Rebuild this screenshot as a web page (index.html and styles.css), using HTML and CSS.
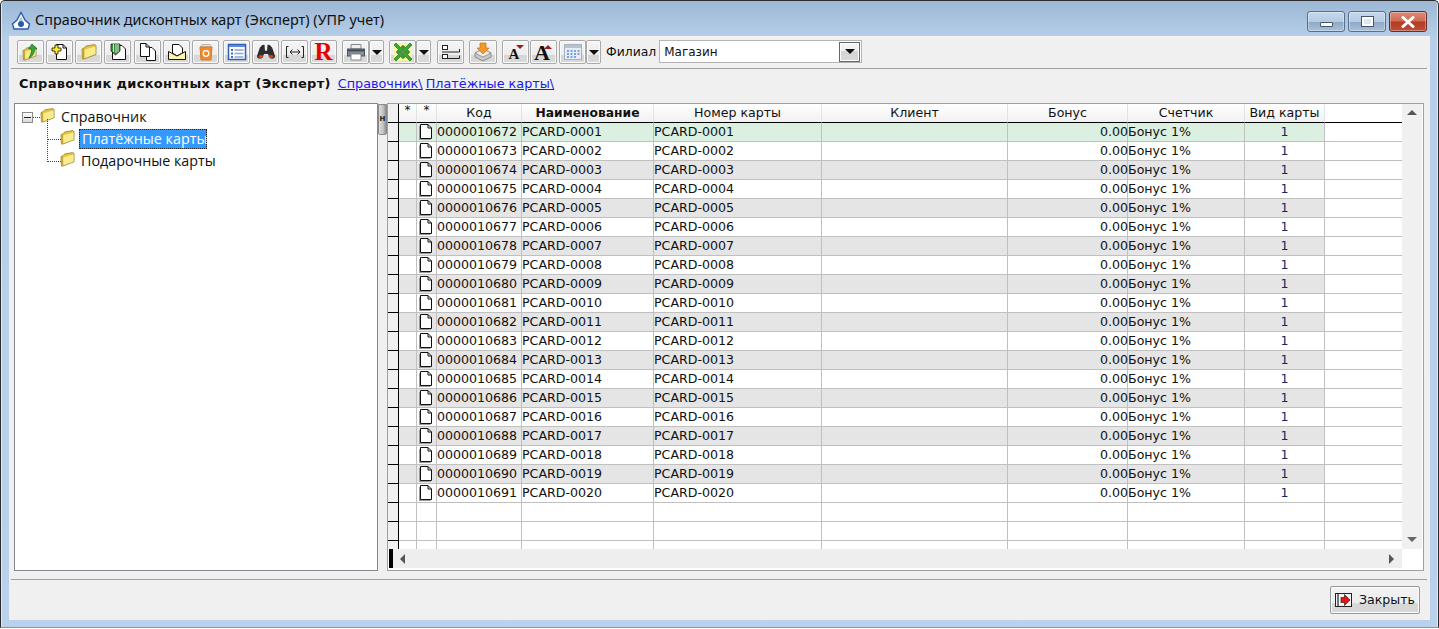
FILE: index.html
```html
<!DOCTYPE html>
<html lang="ru">
<head>
<meta charset="utf-8">
<title>Справочник дисконтных карт (Эксперт) (УПР учет)</title>
<link rel="stylesheet" href="styles.css">
</head>
<body>
<svg class="defs" width="0" height="0">
  <symbol id="folder" viewBox="0 0 16 16">
    <path d="M1 5 4 3.500 5 2 13.500 .6 15 1.500 15 10.500 3 15 1.500 15Z" fill="#e6c63e" stroke="#8a7f3c" stroke-width=".8"/>
    <path d="M3.300 5.800 14.400 2.600 14.500 10.100 3.500 14.200Z" fill="#faec8c"/>
    <path d="M1.200 5.500 3.200 5 3.400 14.600 1.600 15Z" fill="#c8a52f"/>
  </symbol>
  <symbol id="doc" viewBox="0 0 14 16">
    <path d="M0 2h1.500v12.500h10V16H0Z" fill="#9c9c9c"/>
    <path d="M1.500 .5H9L12.500 4V14.500H1.500Z" fill="#fff" stroke="#111"/>
    <path d="M9 .5V4H12.500" fill="none" stroke="#111"/>
  </symbol>
  <symbol id="inarrow" viewBox="0 0 10 10">
    <path d="M9.500 9.500V3.500L7.500 5.500 3 1 1 3 5.500 7.500 3.500 9.500Z" fill="#36a836" stroke="#176017" stroke-width=".6"/>
  </symbol>
</svg>
<div class="window">
  <header class="titlebar">
    <svg class="logo" width="20" height="20" viewBox="0 0 20 20"><path d="M10 1.500 14 9 18.500 13 17 18H3L1.500 13 6 9Z" fill="#fff" stroke="#2a5aa8" stroke-width="1.400"/><circle cx="10" cy="13" r="3" fill="#2a5aa8"/><path d="M10 5 12 10H8Z" fill="#a9c6ea"/></svg>
    <span class="title">Справочник дисконтных карт (Эксперт) (УПР учет)</span>
    <div class="caps">
      <div class="cap"><i class="cap-min"></i></div>
      <div class="cap"><i class="cap-max"></i></div>
      <div class="cap cap-close"><svg width="14" height="12" viewBox="0 0 14 12"><path d="M2 1.500 12 10.500M12 1.500 2 10.500" stroke="#fff" stroke-width="3" stroke-linecap="round"/></svg></div>
    </div>
  </header>

  <main class="client">
    <nav class="toolbar">
      <div class="btn"><svg width="20" height="20" viewBox="0 0 20 20"><use href="#folder" x="1" y="4" width="15" height="15"/><path d="M11 2 16 7H13.500C13.500 11 12 14 8 16 10 12 10.500 10 10.500 7H7.500Z" fill="#37a537" stroke="#1c6a1c" stroke-width=".7"/></svg></div>
      <div class="btn"><svg width="20" height="20" viewBox="0 0 20 20"><path d="M6.500 2.500H13L16.500 6V17.500H6.500Z" fill="#fff" stroke="#111"/><path d="M13 2.500V6H16.500" fill="none" stroke="#111"/><path d="M5 3H8V6H11V9H8V12H5V9H2V6H5Z" fill="#ffeb1a" stroke="#111" stroke-width=".8"/></svg></div>
      <div class="btn"><svg width="20" height="20" viewBox="0 0 20 20"><use href="#folder" x="2" y="2" width="16" height="16"/></svg></div>
      <div class="btn"><svg width="20" height="20" viewBox="0 0 20 20"><path d="M4.500 3.500H14L17.500 7V17.500H4.500Z" fill="#fff" stroke="#111"/><path d="M3 2H12V9L7.500 13 3 9Z" fill="#3c8c3c" stroke="#111" stroke-width=".7"/><path d="M5.500 2V10M8 2V11M10 2V10" stroke="#cfe9cf"/></svg></div>
      <div class="btn ml1"><svg width="20" height="20" viewBox="0 0 20 20"><path d="M8.500 5.500H14L17.500 9V18.500H8.500Z" fill="#fff" stroke="#111"/><path d="M2.500 1.500H8L11.500 5V14.500H2.500Z" fill="#fff" stroke="#111"/><path d="M8 1.500V5H11.500" fill="none" stroke="#111"/></svg></div>
      <div class="btn"><svg width="20" height="20" viewBox="0 0 20 20"><path d="M5.500 11V2.500H12L15.500 6V11L10 14Z" fill="#fff" stroke="#111"/><path d="M1.500 9.500V17.500H18.500V9.500L10 14Z" fill="#fdf6a8" stroke="#111"/></svg></div>
      <div class="btn"><svg width="20" height="20" viewBox="0 0 20 20"><path d="M6 2.500H14L15.500 5H4.500Z" fill="#e4e4e4" stroke="#b5b5b5"/><path d="M4 5H16L15 18H5Z" fill="#f08a2e" stroke="#d8782a"/><circle cx="10" cy="11.500" r="2.800" fill="none" stroke="#fff" stroke-width="1.300"/></svg></div>
      <div class="btn ml2"><svg width="20" height="20" viewBox="0 0 20 20"><rect x="1.500" y="2.500" width="17" height="15" fill="#fff" stroke="#2f5fb8" stroke-width="1.500"/><path d="M2 3h16v2H2Z" fill="#5b8ad6"/><path d="M4 7h2v2H4ZM4 10.500h2v2H4ZM4 14h2v2H4Z" fill="#3a6cc4"/><path d="M7.500 8h9M7.500 11.500h9M7.500 15h9" stroke="#8aa6d8" stroke-width="1.300"/></svg></div>
      <div class="btn"><svg width="20" height="20" viewBox="0 0 20 20"><path d="M3 8C4 4 7 2 8.500 3L9 9 10 8.500 11 9 11.500 3C13 2 16 4 17 8L19 14C19 17 15 17.500 13.500 15.500L12 12H8L6.500 15.500C5 17.500 1 17 1 14Z" fill="#2d2d2d"/><ellipse cx="5" cy="14.500" rx="2.400" ry="1.500" fill="#e0431c"/><ellipse cx="15" cy="14.500" rx="2.400" ry="1.500" fill="#e0431c"/></svg></div>
      <div class="btn"><svg width="20" height="20" viewBox="0 0 20 20"><path d="M3.500 4.500H1.500V15.500H3.500M16.500 4.500H18.500V15.500H16.500M5.500 10H14.500M7.500 7.500 5 10 7.500 12.500M12.500 7.500 15 10 12.500 12.500" fill="none" stroke="#222" stroke-width="1"/></svg></div>
      <div class="btn"><span class="glyph-r">R</span></div>
      <div class="btn ml3"><svg width="20" height="20" viewBox="0 0 20 20"><path d="M5 2.500H15V7H5Z" fill="#eee" stroke="#888"/><rect x="1.500" y="7" width="17" height="7" fill="#7b8794" stroke="#4c5560"/><path d="M2 8.500H18" stroke="#3f4750" stroke-width="1.500"/><path d="M5 12H15V18H5Z" fill="#fff" stroke="#888"/><circle cx="16" cy="11" r=".8" fill="#6fe06f"/></svg></div>
      <div class="btn arrow"><i class="caret"></i></div>
      <div class="btn ml5"><svg width="22" height="20" viewBox="0 0 22 20"><rect x="2" y="1" width="18" height="18" fill="#f8f6a0"/><use href="#inarrow" x="1" y="0" width="10" height="10"/><use href="#inarrow" x="-21" y="0" width="10" height="10" transform="scale(-1 1)"/><use href="#inarrow" x="1" y="-20" width="10" height="10" transform="scale(1 -1)"/><use href="#inarrow" x="-21" y="-20" width="10" height="10" transform="scale(-1 -1)"/></svg></div>
      <div class="btn arrow"><i class="caret"></i></div>
      <div class="btn ml6"><svg width="22" height="20" viewBox="0 0 22 20"><rect x="2.500" y="3.500" width="5" height="4" fill="#fff" stroke="#222"/><rect x="2.500" y="12.500" width="5" height="4" fill="#fff" stroke="#222"/><path d="M2 10H19.500V7M7.500 16.500H19.500V13.500" fill="none" stroke="#222"/></svg></div>
      <div class="btn wide ml3"><svg width="22" height="20" viewBox="0 0 22 20"><path d="M3 11 11 7 19 11V15L11 19 3 15Z" fill="#c8c8c8" stroke="#777" stroke-width=".8"/><path d="M3 11 11 15 19 11 11 7Z" fill="#efefef" stroke="#888" stroke-width=".8"/><path d="M8 1H14V6H17L11 12 5 6H8Z" fill="#f59a2a" stroke="#c96f10" stroke-width=".7"/></svg></div>
      <div class="btn ml3"><span class="glyph-a small">A</span><i class="tri-down"></i></div>
      <div class="btn mln1"><span class="glyph-a big">A</span><i class="tri-up"></i></div>
      <div class="btn"><svg width="20" height="20" viewBox="0 0 20 20"><rect x="1.500" y="2.500" width="17" height="15" fill="#e8ecf2" stroke="#a9b2bd"/><path d="M2 3h16v3H2Z" fill="#b8c2cd"/><path d="M4 8h2v2H4ZM7.500 8h2v2h-2ZM11 8h2v2h-2ZM14.500 8h2v2h-2ZM4 11h2v2H4ZM7.500 11h2v2h-2ZM11 11h2v2h-2ZM14.500 11h2v2h-2ZM4 14h2v2H4ZM7.500 14h2v2h-2ZM11 14h2v2h-2Z" fill="#74a5e2"/></svg></div>
      <div class="btn arrow"><i class="caret"></i></div>
      <span class="branch-label">Филиал</span>
      <div class="combo"><span class="combo-text">Магазин</span><div class="combo-btn"><i class="caret"></i></div></div>
    </nav>

    <div class="crumbs">
      <b class="crumbs-title">Справочник дисконтных карт (Эксперт)</b>
      <a class="link" href="#">Справочник\</a>
      <a class="link" href="#">Платёжные карты\</a>
    </div>

    <section class="panes">
      <div class="tree">
        <div class="tree-row root"><i class="minus"></i><i class="root-dots"></i><svg class="tree-folder" width="15" height="15"><use href="#folder" width="15" height="15"/></svg><span class="tree-text">Справочник</span></div>
        <div class="tree-row child first"><svg class="tree-folder" width="15" height="15"><use href="#folder" width="15" height="15"/></svg><span class="tree-text selected">Платёжные карты</span></div>
        <div class="tree-row child last"><svg class="tree-folder" width="15" height="15"><use href="#folder" width="15" height="15"/></svg><span class="tree-text">Подарочные карты</span></div>
      </div>
      <div class="splitter"><div class="handle"><i>H</i></div></div>
      <div class="grid-panel">
        <div class="grid-top">
          <div class="grid">
            <div class="row head"><span></span><span>*</span><span>*</span><span>Код</span><span class="strong">Наименование</span><span>Номер карты</span><span>Клиент</span><span>Бонус</span><span>Счетчик</span><span>Вид карты</span><span></span></div>
            <div class="row current"><span></span><span></span><span><svg class="doc" width="14" height="16"><use href="#doc" width="14" height="16"/></svg></span><span>0000010672</span><span>PCARD-0001</span><span>PCARD-0001</span><span></span><span>0.00</span><span>Бонус 1%</span><span>1</span><span></span></div>
            <div class="row"><span></span><span></span><span><svg class="doc" width="14" height="16"><use href="#doc" width="14" height="16"/></svg></span><span>0000010673</span><span>PCARD-0002</span><span>PCARD-0002</span><span></span><span>0.00</span><span>Бонус 1%</span><span>1</span><span></span></div>
            <div class="row alt"><span></span><span></span><span><svg class="doc" width="14" height="16"><use href="#doc" width="14" height="16"/></svg></span><span>0000010674</span><span>PCARD-0003</span><span>PCARD-0003</span><span></span><span>0.00</span><span>Бонус 1%</span><span>1</span><span></span></div>
            <div class="row"><span></span><span></span><span><svg class="doc" width="14" height="16"><use href="#doc" width="14" height="16"/></svg></span><span>0000010675</span><span>PCARD-0004</span><span>PCARD-0004</span><span></span><span>0.00</span><span>Бонус 1%</span><span>1</span><span></span></div>
            <div class="row alt"><span></span><span></span><span><svg class="doc" width="14" height="16"><use href="#doc" width="14" height="16"/></svg></span><span>0000010676</span><span>PCARD-0005</span><span>PCARD-0005</span><span></span><span>0.00</span><span>Бонус 1%</span><span>1</span><span></span></div>
            <div class="row"><span></span><span></span><span><svg class="doc" width="14" height="16"><use href="#doc" width="14" height="16"/></svg></span><span>0000010677</span><span>PCARD-0006</span><span>PCARD-0006</span><span></span><span>0.00</span><span>Бонус 1%</span><span>1</span><span></span></div>
            <div class="row alt"><span></span><span></span><span><svg class="doc" width="14" height="16"><use href="#doc" width="14" height="16"/></svg></span><span>0000010678</span><span>PCARD-0007</span><span>PCARD-0007</span><span></span><span>0.00</span><span>Бонус 1%</span><span>1</span><span></span></div>
            <div class="row"><span></span><span></span><span><svg class="doc" width="14" height="16"><use href="#doc" width="14" height="16"/></svg></span><span>0000010679</span><span>PCARD-0008</span><span>PCARD-0008</span><span></span><span>0.00</span><span>Бонус 1%</span><span>1</span><span></span></div>
            <div class="row alt"><span></span><span></span><span><svg class="doc" width="14" height="16"><use href="#doc" width="14" height="16"/></svg></span><span>0000010680</span><span>PCARD-0009</span><span>PCARD-0009</span><span></span><span>0.00</span><span>Бонус 1%</span><span>1</span><span></span></div>
            <div class="row"><span></span><span></span><span><svg class="doc" width="14" height="16"><use href="#doc" width="14" height="16"/></svg></span><span>0000010681</span><span>PCARD-0010</span><span>PCARD-0010</span><span></span><span>0.00</span><span>Бонус 1%</span><span>1</span><span></span></div>
            <div class="row alt"><span></span><span></span><span><svg class="doc" width="14" height="16"><use href="#doc" width="14" height="16"/></svg></span><span>0000010682</span><span>PCARD-0011</span><span>PCARD-0011</span><span></span><span>0.00</span><span>Бонус 1%</span><span>1</span><span></span></div>
            <div class="row"><span></span><span></span><span><svg class="doc" width="14" height="16"><use href="#doc" width="14" height="16"/></svg></span><span>0000010683</span><span>PCARD-0012</span><span>PCARD-0012</span><span></span><span>0.00</span><span>Бонус 1%</span><span>1</span><span></span></div>
            <div class="row alt"><span></span><span></span><span><svg class="doc" width="14" height="16"><use href="#doc" width="14" height="16"/></svg></span><span>0000010684</span><span>PCARD-0013</span><span>PCARD-0013</span><span></span><span>0.00</span><span>Бонус 1%</span><span>1</span><span></span></div>
            <div class="row"><span></span><span></span><span><svg class="doc" width="14" height="16"><use href="#doc" width="14" height="16"/></svg></span><span>0000010685</span><span>PCARD-0014</span><span>PCARD-0014</span><span></span><span>0.00</span><span>Бонус 1%</span><span>1</span><span></span></div>
            <div class="row alt"><span></span><span></span><span><svg class="doc" width="14" height="16"><use href="#doc" width="14" height="16"/></svg></span><span>0000010686</span><span>PCARD-0015</span><span>PCARD-0015</span><span></span><span>0.00</span><span>Бонус 1%</span><span>1</span><span></span></div>
            <div class="row"><span></span><span></span><span><svg class="doc" width="14" height="16"><use href="#doc" width="14" height="16"/></svg></span><span>0000010687</span><span>PCARD-0016</span><span>PCARD-0016</span><span></span><span>0.00</span><span>Бонус 1%</span><span>1</span><span></span></div>
            <div class="row alt"><span></span><span></span><span><svg class="doc" width="14" height="16"><use href="#doc" width="14" height="16"/></svg></span><span>0000010688</span><span>PCARD-0017</span><span>PCARD-0017</span><span></span><span>0.00</span><span>Бонус 1%</span><span>1</span><span></span></div>
            <div class="row"><span></span><span></span><span><svg class="doc" width="14" height="16"><use href="#doc" width="14" height="16"/></svg></span><span>0000010689</span><span>PCARD-0018</span><span>PCARD-0018</span><span></span><span>0.00</span><span>Бонус 1%</span><span>1</span><span></span></div>
            <div class="row alt"><span></span><span></span><span><svg class="doc" width="14" height="16"><use href="#doc" width="14" height="16"/></svg></span><span>0000010690</span><span>PCARD-0019</span><span>PCARD-0019</span><span></span><span>0.00</span><span>Бонус 1%</span><span>1</span><span></span></div>
            <div class="row"><span></span><span></span><span><svg class="doc" width="14" height="16"><use href="#doc" width="14" height="16"/></svg></span><span>0000010691</span><span>PCARD-0020</span><span>PCARD-0020</span><span></span><span>0.00</span><span>Бонус 1%</span><span>1</span><span></span></div>
            <div class="row"><span></span><span></span><span></span><span></span><span></span><span></span><span></span><span></span><span></span><span></span><span></span></div>
            <div class="row"><span></span><span></span><span></span><span></span><span></span><span></span><span></span><span></span><span></span><span></span><span></span></div>
            <div class="row"><span></span><span></span><span></span><span></span><span></span><span></span><span></span><span></span><span></span><span></span><span></span></div>
          </div>
          <div class="vscroll"><i class="tri t-up"></i><i class="tri t-down"></i></div>
        </div>
        <div class="grid-bottom">
          <i class="frozen-mark"></i>
          <div class="hscroll"><i class="tri t-left"></i><i class="tri t-right"></i></div>
          <div class="corner"></div>
        </div>
      </div>
    </section>

    <footer class="footer">
      <div class="btn close-btn">
        <svg width="18" height="14" viewBox="0 0 18 14"><rect x=".5" y=".5" width="16" height="13" fill="#f4f4f4" stroke="#222"/><path d="M2 1h2v12H2Z" fill="#777"/><path d="M6 4.500H9.500V1.500L15 7 9.500 12.500V9.500H6Z" fill="#ee1111" stroke="#111" stroke-width=".6"/></svg>
        <span>Закрыть</span>
      </div>
    </footer>
  </main>
</div>
</body>
</html>
```
FILE: styles.css
```css
* { box-sizing: border-box; }
html, body { margin: 0; height: 100%; background: #fff; overflow: hidden; }
i { display: block; font-style: normal; }
.defs { display: block; height: 0; }

.window {
  width: 1439px; height: 628px;
  display: flex; flex-direction: column;
  border: 1px solid #2b2b2b; border-bottom: 1px solid #3fb4c8;
  border-radius: 5px 5px 0 0;
  background: linear-gradient(180deg, #9cb8d6 0, #b6cee8 36px, #b9d1ea 100%);
  padding: 0 8px 7px 8px;
  box-shadow: inset 1px 0 0 #dbe8f5, inset -1px 0 0 #dbe8f5;
}
.titlebar { height: 35px; display: flex; align-items: center; padding-left: 2px; position: relative; flex: none; }
.logo { margin-right: 4px; margin-top: 4px; }
.title { font: 14.400px/1 "Noto Sans", sans-serif; color: #111; margin-top: 4px; }
.caps { margin-left: auto; display: flex; gap: 3px; margin-right: 3px; align-self: flex-start; padding-top: 10px; }
.cap {
  width: 38px; height: 21px; display: flex; align-items: center; justify-content: center;
  border: 1px solid #5b6f88; border-radius: 3px;
  background: linear-gradient(180deg, #c6d8ec 0, #b4cbe4 50%, #8ea8c4 52%, #a9c0da 100%);
  box-shadow: inset 0 0 0 1px rgba(255,255,255,.35);
}
.cap-close { border-color: #6e2b22; background: linear-gradient(180deg, #dd8a78 0, #cf6a55 48%, #b23a22 52%, #bf4f38 100%); }
.cap-min { width: 13px; height: 5px; margin-top: 6px; background: #fff; border: 1px solid #46566a; border-radius: 1px; }
.cap-max { width: 13px; height: 11px; background: #dfe8f2; border: 1px solid #46566a; box-shadow: inset 0 0 0 2px #fff; }

.client { flex: 1; min-height: 0; background: #f0f0f0; display: flex; flex-direction: column; }

.toolbar {
  height: 33px; flex: none; display: flex; align-items: flex-start;
  margin: 0 3px 0 2px; padding: 4px 0 0 6px;
  border-bottom: 1px solid #a0a0a0;
}
.btn {
  width: 27px; height: 24px; margin-right: 2px; flex: none; position: relative;
  display: flex; align-items: center; justify-content: center;
  border: 1px solid #a9a9a9; border-radius: 2px;
  background: linear-gradient(180deg, #f4f4f4 0, #ededed 62%, #d6d6d6 64%, #d9d9d9 100%);
  box-shadow: inset 0 0 0 1px #fbfbfb;
}
.ml1 { margin-left: 1px; }
.ml2 { margin-left: 2px; }
.ml3 { margin-left: 3px; }
.ml5 { margin-left: 5px; }
.ml6 { margin-left: 6px; }
.mln1 { margin-left: -1px; }
.btn.arrow { width: 15px; margin-right: 0; margin-left: -2px; }
.btn.wide { width: 28px; }
.caret { width: 0; height: 0; border-left: 5px solid transparent; border-right: 5px solid transparent; border-top: 5px solid #111; }
.glyph-r { font: bold 25px/24px "Liberation Serif", serif; color: #e60000; }
.glyph-a { font-family: "Liberation Serif", serif; font-weight: bold; color: #111; }
.glyph-a.small { font-size: 15px; line-height: 20px; margin-top: 3px; margin-right: 3px; }
.glyph-a.big { font-size: 22px; line-height: 22px; margin-top: 1px; margin-right: 3px; }
.tri-down, .tri-up { position: absolute; top: 4px; right: 4px; width: 0; height: 0; border-left: 4px solid transparent; border-right: 4px solid transparent; }
.tri-down { border-top: 4px solid #9c1c1c; }
.tri-up { border-bottom: 4px solid #9c1c1c; }
.branch-label { font: 12.400px/24px "DejaVu Sans", sans-serif; color: #111; margin: 0 3px 0 5px; }
.combo {
  width: 203px; height: 23px; background: #fff; border: 1px solid #b5b5b5;
  display: flex; align-items: center; justify-content: space-between; padding: 0 1px 0 4px;
}
.combo-text { font: 12px/1 "DejaVu Sans", sans-serif; color: #111; }
.combo-btn {
  width: 21px; height: 20px; border: 1px solid #666; display: flex; align-items: center; justify-content: center;
  background: linear-gradient(180deg, #f6f6f6 0, #eee 45%, #d4d4d4 47%, #d8d8d8 100%);
  box-shadow: inset 0 0 0 1px #fff;
}

.crumbs { height: 34px; flex: none; padding: 7px 0 0 10px; display: flex; align-items: flex-start; font: 12.800px/16px "DejaVu Sans", sans-serif; }
.crumbs-title { font-size: 13px; font-weight: bold; letter-spacing: .3px; color: #111; margin-right: 7px; }
.link { color: #1a1ae6; text-decoration: underline; margin-right: 3px; }

.panes { height: 468px; flex: none; display: flex; margin: 0 6px 0 5px; }
.tree { width: 364px; flex: none; background: #fff; border: 1px solid #828790; padding-top: 2px; }
.tree-row { height: 22px; display: flex; align-items: center; position: relative; }
.tree-text { font: 14.300px/20px "Open Sans", sans-serif; color: #111; white-space: nowrap; }
.tree-row.root { padding-left: 7px; }
.minus { width: 11px; height: 11px; border: 1px solid #8a8a8a; background: linear-gradient(180deg, #fff, #d8d8d8); position: relative; }
.minus::after { content: ""; position: absolute; left: 1px; right: 1px; top: 4px; height: 1px; background: #222; }
.root-dots { width: 7px; border-top: 1px dotted #444; }
.root .tree-folder { margin-right: 6px; margin-top: -4px; }
.tree-row.child { padding-left: 45px; }
.child .tree-folder { margin-right: 4px; margin-top: -4px; }
.child::before {
  content: ""; position: absolute; left: 32px; top: -11px; width: 13px; height: 22px;
  border-left: 1px dotted #444; border-bottom: 1px dotted #444;
}
.child.first::before { top: -9px; height: 20px; }
.tree-text.selected { background: #3399ff; color: #fff; padding: 0 3px; height: 20px; width: 128px; outline: 1px dotted #222; outline-offset: -1px; }
.child.last .tree-text { margin-left: 2px; }

.splitter { width: 10px; flex: none; background: #f0f0f0; border-right: 1px solid #a0a0a0; }
.handle {
  width: 9px; height: 31px; margin-top: 1px; display: flex; align-items: center; justify-content: center;
  background: linear-gradient(90deg, #dcdcdc, #c2c2c2 60%, #8e8e8e); border: 1px solid #8a8a8a; border-radius: 0 0 2px 2px;
}
.handle i { font: bold 7px/1 "DejaVu Sans", sans-serif; color: #222; }

.grid-panel { flex: 1; min-width: 0; display: flex; flex-direction: column; background: #fff; border: 1px solid #a0a0a0; border-left: 0; padding-right: 1px; }
.grid-top { height: 445px; flex: none; display: flex; }
.grid { flex: 1; min-width: 0; overflow: hidden; }
.row {
  height: 19px; display: grid;
  grid-template-columns: 11px 18px 20px 85px 132px 168px 186px 120px 117px 80px 1fr;
  font: 12.600px/18px "DejaVu Sans", sans-serif; color: #111;
}
.row > span { display: block; overflow: hidden; white-space: nowrap; border-right: 1px solid #c0c0c0; border-bottom: 1px solid #c0c0c0; }
.row > span:nth-child(1) { background: #f0f0f0; border-right: 1px solid #000; border-bottom: 1px solid #000; }
.row > span:nth-child(8) { text-align: right; border-right: 0; box-shadow: inset -1px 0 0 #c0c0c0; }
.row > span:nth-child(10) { text-align: center; color: #0a2a6a; }
.row > span:nth-child(11) { border-right: 0; }
.row.current > span:nth-child(n+2):nth-child(-n+10) { background: #dbf0e1; }
.row.alt > span:nth-child(n+2):nth-child(-n+10) { background: #e5e5e5; }
.row.head > span { border-right: 1px solid #e3e3e3; border-bottom: 1px solid #000; text-align: center; color: #111; background: linear-gradient(180deg, #fff, #f1f1f1); box-shadow: none; }
.row.head > span:nth-child(1) { background: #f0f0f0; border-right: 1px solid #000; }
.row.head > span:nth-child(2), .row.head > span:nth-child(3) { font-size: 12px; line-height: 12px; }
.row.head > span:nth-child(11) { background: #fff; border-right: 0; }
.row.head > .strong { font-weight: bold; font-size: 12.300px; }
.doc { display: block; margin: 1px 0 0 2px; }

.vscroll, .hscroll { background: #f0f0f0; position: relative; }
.vscroll { width: 20px; flex: none; }
.tri { position: absolute; width: 0; height: 0; }
.t-up { top: 6px; left: 5px; border-left: 5px solid transparent; border-right: 5px solid transparent; border-bottom: 5px solid #555; }
.t-down { bottom: 7px; left: 5px; border-left: 5px solid transparent; border-right: 5px solid transparent; border-top: 5px solid #666; }
.t-left { top: 5px; left: 7px; border-top: 5px solid transparent; border-bottom: 5px solid transparent; border-right: 5px solid #555; }
.t-right { top: 5px; right: 8px; border-top: 5px solid transparent; border-bottom: 5px solid transparent; border-left: 5px solid #555; }
.grid-bottom { height: 21px; flex: none; display: flex; background: #fff; padding-bottom: 2px; }
.frozen-mark { width: 4px; margin-left: 1px; background: #000; flex: none; }
.hscroll { flex: 1; background: #eee; }
.corner { width: 20px; flex: none; background: #fff; }

.footer { flex: 1; margin: 8px 3px 0 2px; border-top: 1px solid #a0a0a0; display: flex; justify-content: flex-end; padding: 6px 7px 0 0; align-items: flex-start; }
.close-btn { width: 90px; height: 28px; margin: 0; gap: 6px; font: 12.600px/1 "DejaVu Sans", sans-serif; color: #111; border-color: #999; }
```
